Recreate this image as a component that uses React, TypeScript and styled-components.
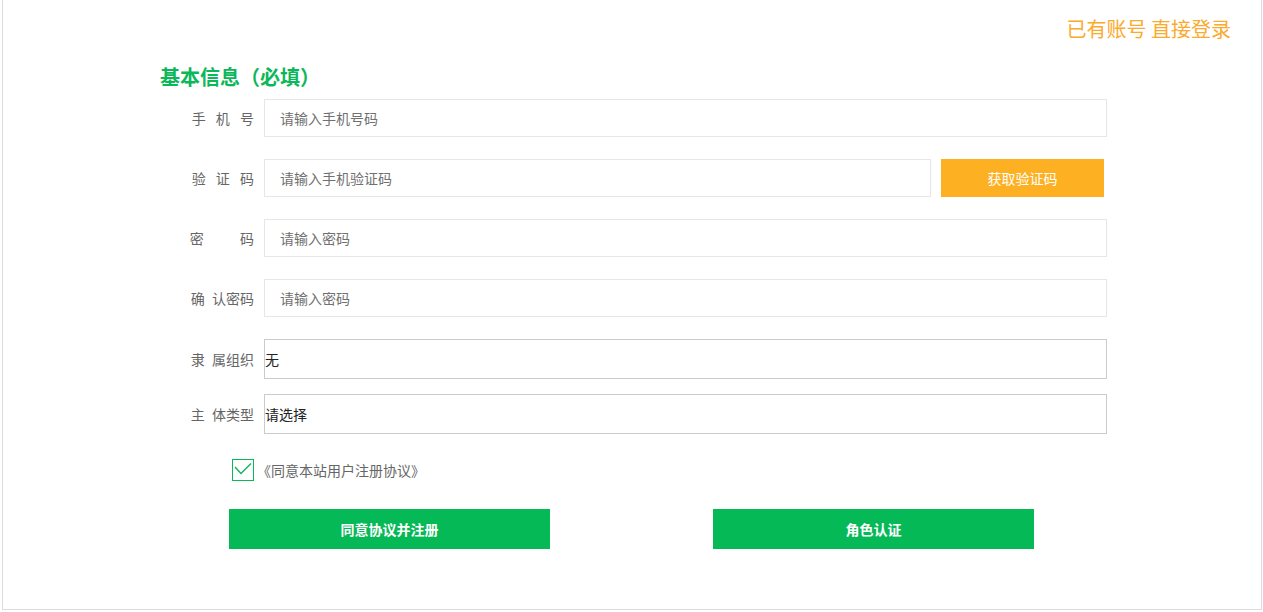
import React from "react";
import styled, { createGlobalStyle } from "styled-components";

const Global = createGlobalStyle`
  html, body { margin: 0; padding: 0; background: #fff; }
  body { font-family: "Noto Sans CJK SC", "Noto Sans", sans-serif; }
  * { box-sizing: border-box; }
`;

const Page = styled.div`
  margin-left: 2px;
  width: 1260px;
  height: 610px;
  border: 1px solid #dcdcdc;
  border-top: none;
  display: flex;
  flex-direction: column;
`;

const TopBar = styled.div`
  display: flex;
  justify-content: flex-end;
  padding: 16px 30px 0 0;
  height: 64px;
`;

const LoginLink = styled.a`
  font-size: 20px;
  line-height: 26px;
  color: #fbaa2b;
  text-decoration: none;
  cursor: pointer;
`;

const Form = styled.div`
  margin-left: 154px;
  display: flex;
  flex-direction: column;
`;

const Title = styled.h2`
  margin: 0 0 9px 3px;
  font-size: 20px;
  line-height: 26px;
  font-weight: 700;
  color: #0cb75a;
`;

const Row = styled.div<{ $mb: number }>`
  display: flex;
  align-items: center;
  gap: 10px;
  margin-bottom: ${(p) => p.$mb}px;
`;

const Label = styled.label<{ $ws: number }>`
  width: 97px;
  text-align: right;
  font-size: 14px;
  color: #666;
  white-space: pre;
  word-spacing: ${(p) => p.$ws}px;
`;

const TextInput = styled.input<{ $w: number }>`
  width: ${(p) => p.$w}px;
  height: 38px;
  border: 1px solid #e6e6e6;
  padding: 0 0 0 15px;
  font-family: inherit;
  font-size: 14px;
  color: #333;
  outline: none;
  &::placeholder { color: #707070; }
`;

const Select = styled.select`
  width: 843px;
  height: 40px;
  border: 1px solid #cbcbcb;
  padding: 0;
  font-family: inherit;
  font-size: 14px;
  color: #222;
  background: #fff;
  appearance: none;
  -webkit-appearance: none;
  outline: none;
`;

const CodeButton = styled.button`
  width: 163px;
  height: 38px;
  border: none;
  background: #fdb022;
  color: #fff;
  font-family: inherit;
  font-size: 14px;
  cursor: pointer;
`;

const AgreeRow = styled.div`
  display: flex;
  align-items: center;
  gap: 3px;
  margin: 0 0 28px 75px;
`;

const CheckBox = styled.span`
  width: 22px;
  height: 22px;
  border: 1.5px solid #0cb75a;
  display: flex;
  align-items: center;
  justify-content: center;
`;

const AgreeText = styled.span`
  font-size: 14px;
  color: #666;
`;

const ButtonRow = styled.div`
  display: flex;
  gap: 163px;
  margin-left: 72px;
`;

const GreenButton = styled.button`
  width: 321px;
  height: 40px;
  border: none;
  background: #05b956;
  color: #fff;
  font-family: inherit;
  font-size: 14px;
  font-weight: 700;
  cursor: pointer;
`;

export default function App() {
  return (
    <>
      <Global />
      <Page>
        <TopBar>
          <LoginLink>已有账号 直接登录</LoginLink>
        </TopBar>
        <Form>
          <Title>基本信息（必填）</Title>
          <Row $mb={22}>
            <Label $ws={7}>手 机 号</Label>
            <TextInput $w={843} placeholder="请输入手机号码" />
          </Row>
          <Row $mb={22}>
            <Label $ws={7}>验 证 码</Label>
            <TextInput $w={667} placeholder="请输入手机验证码" />
            <CodeButton>获取验证码</CodeButton>
          </Row>
          <Row $mb={22}>
            <Label $ws={33}>密 码</Label>
            <TextInput $w={843} type="password" placeholder="请输入密码" />
          </Row>
          <Row $mb={22}>
            <Label $ws={4}>确 认密码</Label>
            <TextInput $w={843} type="password" placeholder="请输入密码" />
          </Row>
          <Row $mb={15}>
            <Label $ws={4}>隶 属组织</Label>
            <Select defaultValue="无">
              <option value="无">无</option>
            </Select>
          </Row>
          <Row $mb={25}>
            <Label $ws={4}>主 体类型</Label>
            <Select defaultValue="请选择">
              <option value="请选择">请选择</option>
            </Select>
          </Row>
          <AgreeRow>
            <CheckBox>
              <svg width="20" height="20" viewBox="0 0 20 20">
                <polyline
                  points="2,7 8,13.5 18,3.5"
                  fill="none"
                  stroke="#0cb75a"
                  strokeWidth="1.4"
                />
              </svg>
            </CheckBox>
            <AgreeText>《同意本站用户注册协议》</AgreeText>
          </AgreeRow>
          <ButtonRow>
            <GreenButton>同意协议并注册</GreenButton>
            <GreenButton>角色认证</GreenButton>
          </ButtonRow>
        </Form>
      </Page>
    </>
  );
}
